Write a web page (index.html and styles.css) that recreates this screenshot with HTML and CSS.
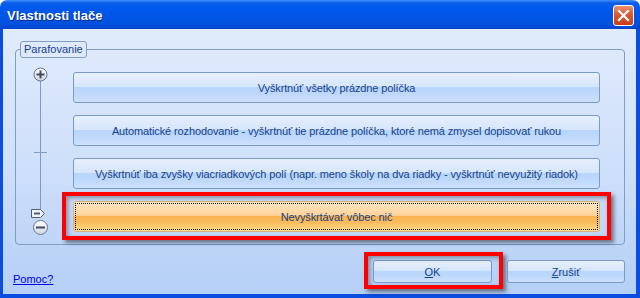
FILE: index.html
```html
<!DOCTYPE html>
<html lang="sk">
<head>
  <meta charset="UTF-8">
  <title>Vlastnosti tlače</title>
  <link rel="stylesheet" href="styles.css">
</head>
<body>

<div class="window">
  <div class="titlebar">
    <span class="title">Vlastnosti tlače</span>
    <div class="close">
      <svg width="19" height="19" viewBox="0 0 19 19">
        <path d="M5 5 L14 14 M14 5 L5 14" stroke="#fff" stroke-width="2.2" stroke-linecap="square"/>
      </svg>
    </div>
  </div>

  <div class="client">
    <fieldset class="group">
      <legend>Parafovanie</legend>
      <div class="group-body">
        <svg class="slider" width="18" height="170" viewBox="0 0 18 170">
          <defs>
            <linearGradient id="knob" x1="0" y1="0" x2="0" y2="1">
              <stop offset="0" stop-color="#ffffff"/>
              <stop offset="1" stop-color="#cfd7e3"/>
            </linearGradient>
          </defs>
          <line x1="10.5" y1="14" x2="10.5" y2="143" stroke="#7f9bc2"/>
          <line x1="4" y1="85.5" x2="17" y2="85.5" stroke="#7f9bc2"/>
          <circle cx="10.5" cy="7.5" r="6.5" fill="url(#knob)" stroke="#66758f"/>
          <path d="M6.5 7.5 H14.5 M10.5 3.5 V11.5" stroke="#3f4b60" stroke-width="2"/>
          <polygon points="1.5,142.5 10.5,142.5 14.5,146.5 10.5,150.5 1.5,150.5" fill="#eef3fa" stroke="#4f5e7a"/>
          <path d="M4 146.5 H10" stroke="#4f5e7a" stroke-width="2"/>
          <circle cx="10.5" cy="160.5" r="7" fill="url(#knob)" stroke="#66758f"/>
          <path d="M6 160.5 H15" stroke="#3f4b60" stroke-width="2"/>
        </svg>

        <div class="options">
          <div class="opt">Vyškrtnúť všetky prázdne políčka</div>
          <div class="opt">Automatické rozhodovanie - vyškrtnúť tie prázdne políčka, ktoré nemá zmysel dopisovať rukou</div>
          <div class="opt">Vyškrtnúť iba zvyšky viacriadkových polí (napr. meno školy na dva riadky - vyškrtnúť nevyužitý riadok)</div>
          <div class="opt selected">
            <span class="focus">Nevyškrtávať vôbec nič</span>
            <span class="mark mark-opt"></span>
          </div>
        </div>
      </div>
    </fieldset>

    <div class="footer">
      <a class="help" href="#">Pomoc?</a>
      <div class="btn"><u>O</u>K<span class="mark mark-ok"></span></div>
      <div class="btn"><u>Z</u>rušiť</div>
    </div>
  </div>
</div>

</body>
</html>
```

FILE: styles.css
```css
body {
  margin: 0;
  font-family: Tahoma, "Liberation Sans", Arial, sans-serif;
  font-size: 11px;
  background: #fff;
}

.window {
  width: 640px;
  height: 298px;
  display: flex;
  flex-direction: column;
}

.titlebar {
  height: 29px;
  flex: none;
  display: flex;
  align-items: center;
  padding: 0 6px 0 7px;
  border-radius: 7px 7px 0 0;
  background: linear-gradient(to bottom, #3f8ef8 0, #0b5fe9 3px, #0058ee 8px, #0055e6 55%, #0350dc 85%, #0142c8 100%);
}

.title {
  flex: 1;
  color: #fff;
  font-family: "Liberation Sans", Arial, sans-serif;
  font-weight: bold;
  font-size: 13px;
  text-shadow: 1px 1px 0 #0a2a8a;
  padding-top: 1px;
}

.close {
  width: 19px;
  height: 19px;
  border: 1px solid #fff;
  border-radius: 3px;
  background: linear-gradient(to bottom, #ea9370 0%, #d9582f 45%, #c93d1c 100%);
  display: flex;
  margin-top: 1px;
}

.client {
  flex: 1;
  display: flex;
  flex-direction: column;
  border-style: solid;
  border-color: #0b4de0;
  border-width: 0 4px 4px 3px;
  background: linear-gradient(to bottom, #e1ebfc 0%, #cfe0fa 50%, #b5cff6 100%);
  color: #15428b;
}

.group {
  margin: 12px 11px 0 12px;
  padding: 0;
  min-width: 0;
  border: 1px solid #7f9dc5;
  border-radius: 4px;
}

.group legend {
  margin-left: 4px;
  padding: 0 3px;
  height: 17px;
  box-sizing: border-box;
  line-height: 15px;
  border: 1px solid #7f9dc5;
  border-radius: 3px;
  color: #15428b;
}

.group-body {
  display: flex;
  align-items: flex-start;
  gap: 25px;
  padding: 14px 24px 12px 14px;
}

.slider {
  flex: none;
  margin-top: -5px;
  margin-bottom: -5px;
}

.options {
  flex: 1;
  display: flex;
  flex-direction: column;
  gap: 12px;
}

.opt,
.btn {
  position: relative;
  box-sizing: border-box;
  display: flex;
  align-items: center;
  justify-content: center;
  border: 1px solid #7b9ac6;
  border-radius: 3px;
  background: linear-gradient(to bottom, #e6effd 0%, #d6e6fc 48%, #b8d5fb 50%, #c0d9fb 75%, #cde1fb 100%);
  white-space: nowrap;
}

.opt {
  height: 31px;
  letter-spacing: -0.12px;
}

.opt.selected {
  padding: 1px;
  align-items: stretch;
  border-color: #d8b27a;
  background: linear-gradient(to bottom, #fee7c0 0%, #fdd39a 46%, #fab24f 50%, #fbbf62 75%, #fde08e 100%);
}

.focus {
  flex: 1;
  display: flex;
  align-items: center;
  justify-content: center;
  border: 1px dotted #000;
  color: #15428b;
}

.footer {
  display: flex;
  align-items: flex-start;
  gap: 15px;
  margin-top: 15px;
  padding: 0 11px 0 10px;
}

.help {
  margin-right: auto;
  margin-top: 13px;
  color: #0000ee;
  font-size: 11px;
}

.btn {
  width: 119px;
  height: 23px;
  color: #15428b;
}

.btn + .btn {
  width: 118px;
}

.mark {
  position: absolute;
  border: 4px solid #ff0000;
  box-shadow: 3px 3px 4px rgba(0, 0, 0, 0.45), inset 2px 2px 4px rgba(0, 0, 0, 0.35);
  pointer-events: none;
}

.mark-opt {
  left: -12px;
  right: -12px;
  top: -10px;
  bottom: -9px;
}

.mark-ok {
  left: -10px;
  right: -12px;
  top: -9px;
  bottom: -7px;
}
```
